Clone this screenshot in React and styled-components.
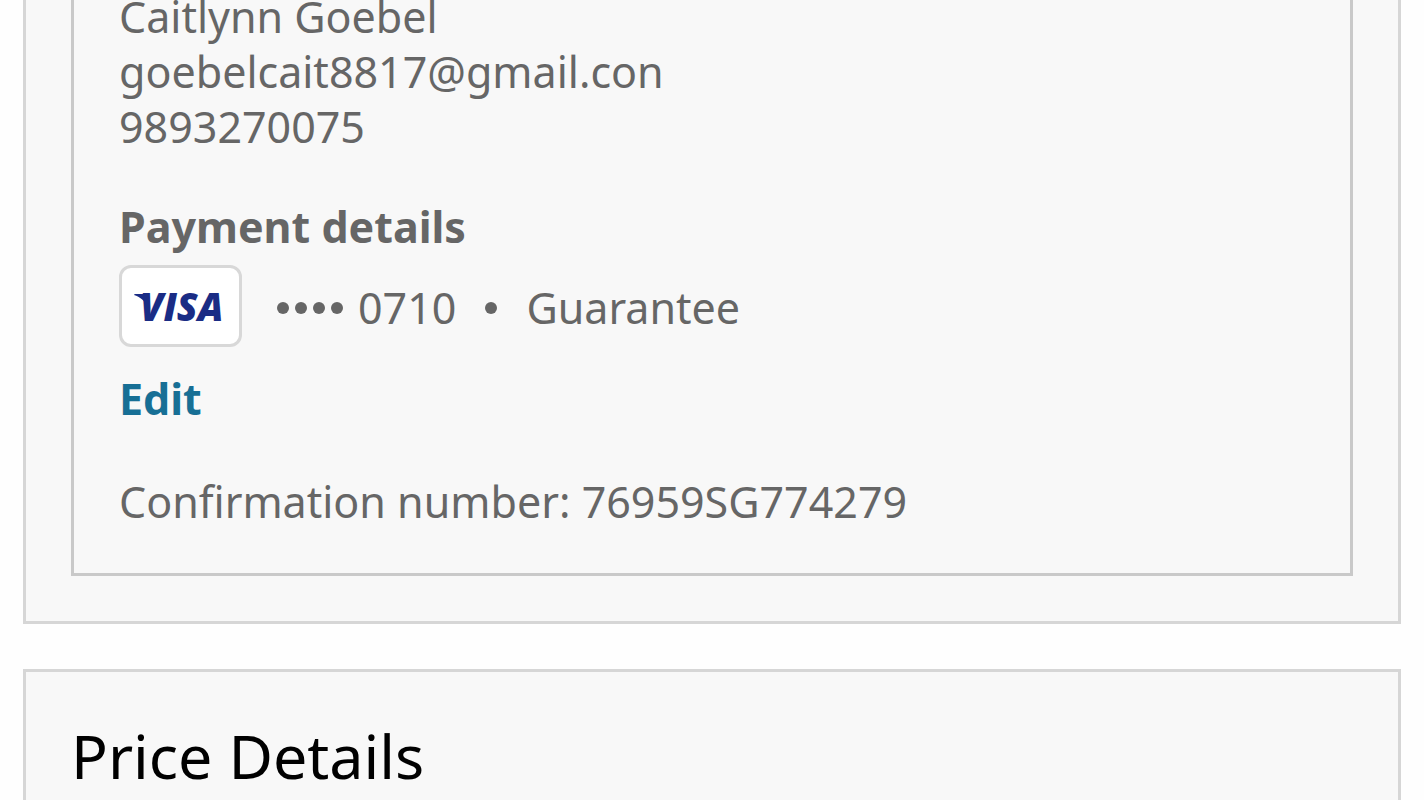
import React from 'react';
import styled, { createGlobalStyle } from 'styled-components';

const GlobalStyle = createGlobalStyle`
  body {
    margin: 0;
    background: #fefefe;
    color: #666;
    font-family: "Noto Sans", "Open Sans", sans-serif;
    font-size: 43px;
    line-height: 55px;
  }
`;

const Page = styled.main`
  display: flex;
  flex-direction: column;
  gap: 45px;
  box-sizing: border-box;
  height: 100vh;
  padding: 0 23px;
  overflow: hidden;
`;

const Card = styled.section`
  flex-shrink: 0;
  padding: 45px;
  border: 3px solid #d6d6d6;
  background: #f8f8f8;

  &:first-child {
    margin-top: -107px;
  }
`;

const Panel = styled.div`
  padding: 45px 45px 44px;
  border: 3px solid #c9c9c9;
`;

const Line = styled.p`
  margin: 0;
`;

const SubTitle = styled.h3`
  margin: 45px 0 11px;
  font-size: 43px;
  font-weight: bold;
`;

const PaymentRow = styled.div`
  display: flex;
  align-items: center;
`;

const CardBadge = styled.span`
  display: flex;
  box-sizing: border-box;
  width: 123px;
  height: 82px;
  margin-right: 35px;
  border: 3px solid #d8d8d8;
  border-radius: 12px;
  background: #fff;
`;

const CardInfo = styled.span`
  display: flex;
  align-items: center;
  padding-top: 3px;
`;

const Dots = styled.span`
  display: flex;
  gap: 6px;
  margin-right: 15px;
`;

const Dot = styled.span`
  width: 12px;
  height: 12px;
  border-radius: 50%;
  background: #666;
`;

const Separator = styled(Dot)`
  margin: 0 29px;
`;

const EditLink = styled.a`
  display: inline-block;
  margin: 24px 0 48px;
  color: #176f95;
  font-weight: bold;
  text-decoration: none;
`;

const Title = styled.h2`
  margin: 0;
  color: #000;
  font-size: 61px;
  font-weight: normal;
  line-height: 78px;
`;

const VisaLogo = () => (
  <svg width="117" height="76" viewBox="0 0 117 76" role="img" aria-label="Visa">
    <path d="M12 27 C12 26 13 26 14 26 H26 L27 37 H24 C23 33 18 29 12 27 Z" fill="#1a2c85" />
    <text
      x="18"
      y="53"
      fill="#1a2c85"
      fontFamily="Open Sans"
      fontSize="38"
      fontStyle="italic"
      fontWeight="800"
    >
      VISA
    </text>
  </svg>
);

const App = () => (
  <>
    <GlobalStyle />
    <Page>
      <Card>
        <Panel>
          <Line>Caitlynn Goebel</Line>
          <Line>goebelcait8817@gmail.con</Line>
          <Line>9893270075</Line>
          <SubTitle>Payment details</SubTitle>
          <PaymentRow>
            <CardBadge>
              <VisaLogo />
            </CardBadge>
            <CardInfo>
              <Dots>
                <Dot />
                <Dot />
                <Dot />
                <Dot />
              </Dots>
              <span>0710</span>
              <Separator />
              <span>Guarantee</span>
            </CardInfo>
          </PaymentRow>
          <EditLink href="#edit">Edit</EditLink>
          <Line>Confirmation number: 76959SG774279</Line>
        </Panel>
      </Card>
      <Card>
        <Title>Price Details</Title>
      </Card>
    </Page>
  </>
);

export default App;
